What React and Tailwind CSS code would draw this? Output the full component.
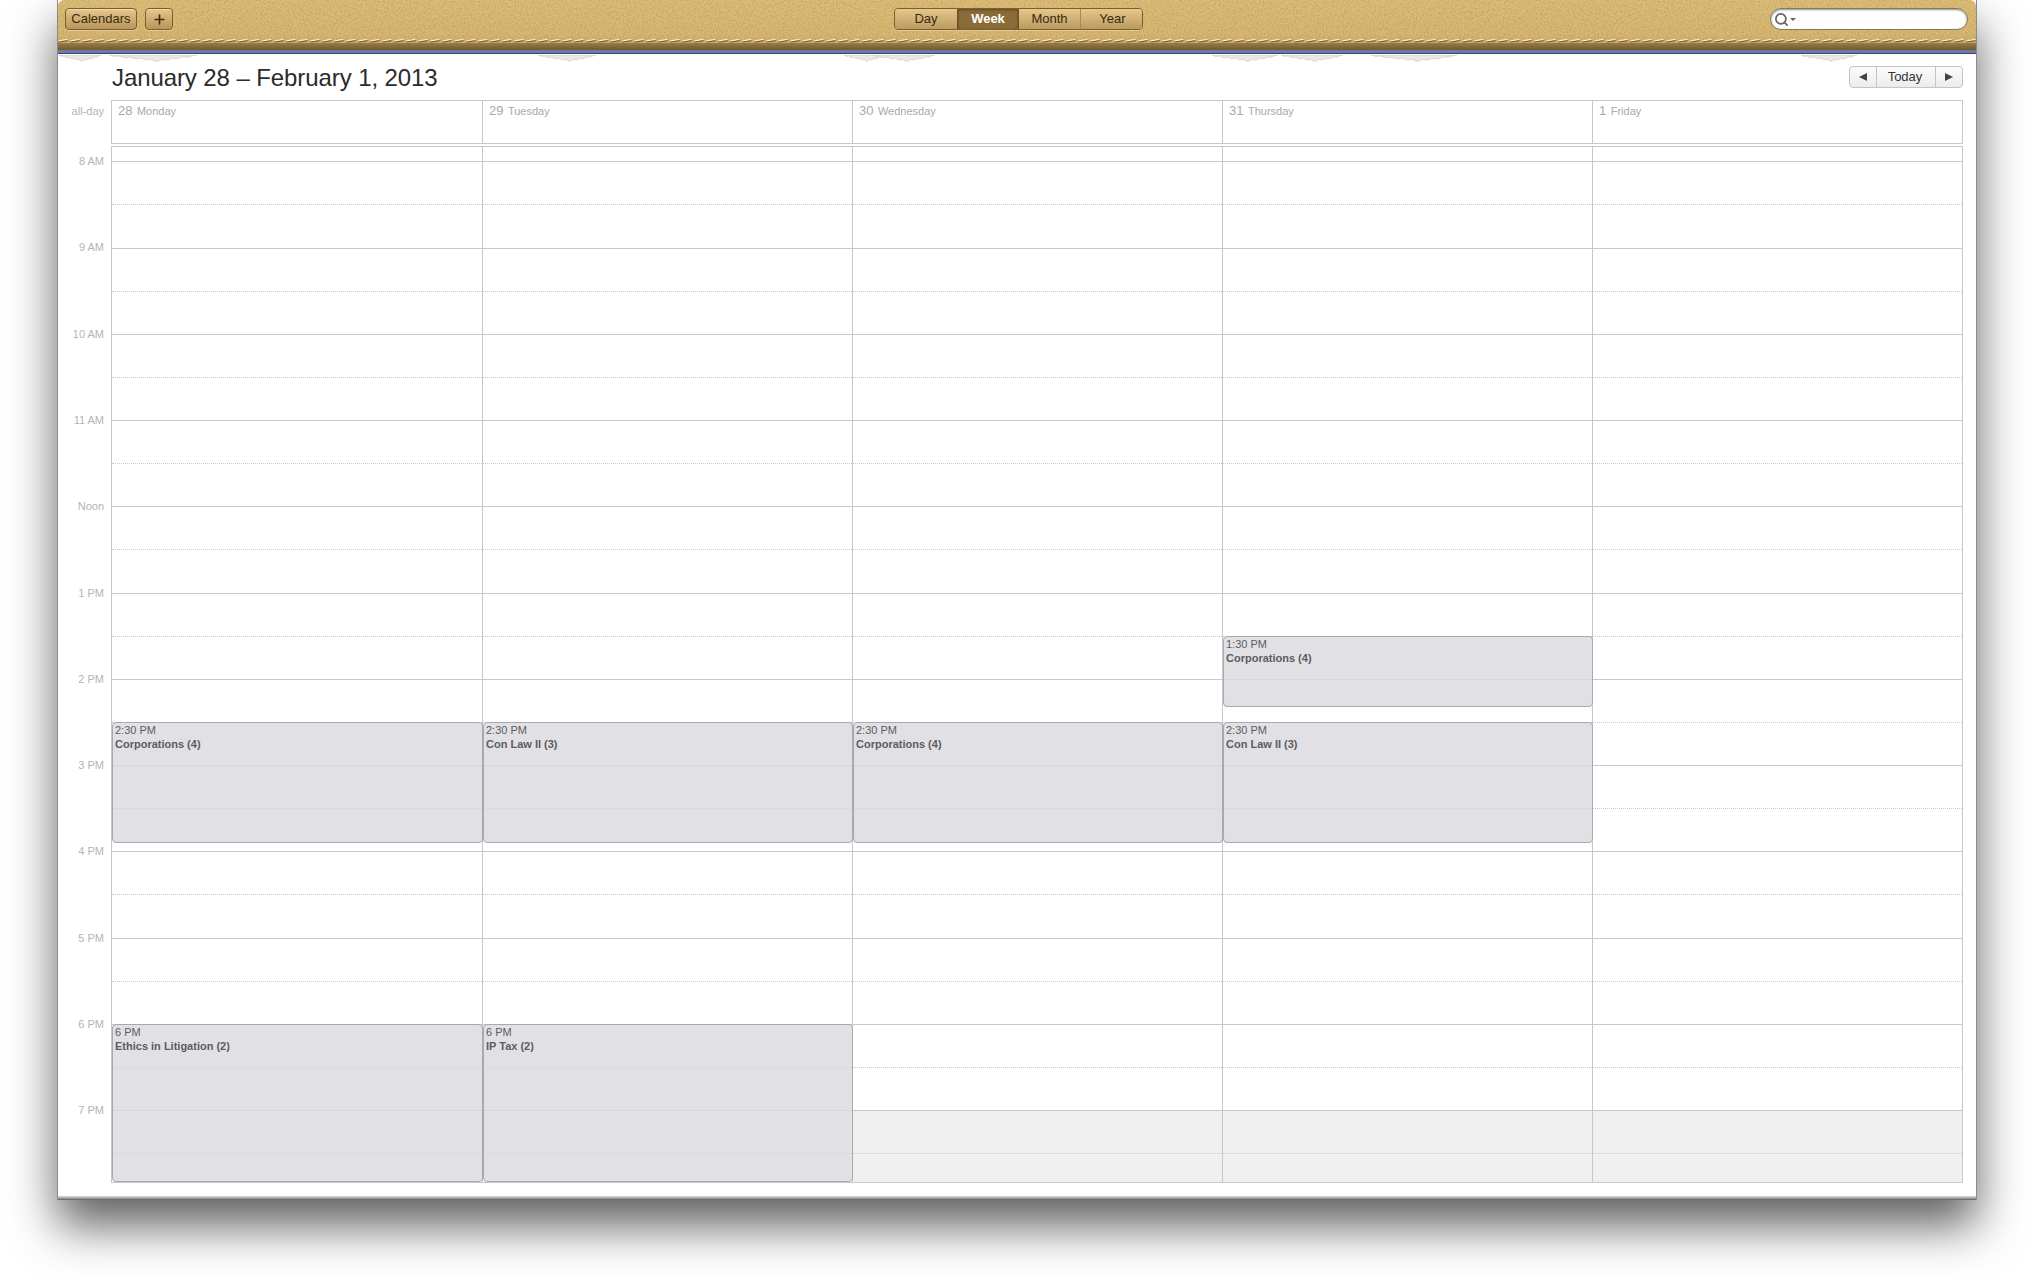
import { Plus, Search } from "lucide-react";

const HOUR = 86.27;
const FIRST_LINE = 14.3;
const HOURS = ["8 AM", "9 AM", "10 AM", "11 AM", "Noon", "1 PM", "2 PM", "3 PM", "4 PM", "5 PM", "6 PM", "7 PM"];

const DAYS = [
  {
    num: 28,
    name: "Monday",
    events: [
      { start: 14.5, end: 15.9, time: "2:30 PM", title: "Corporations (4)" },
      { start: 18, end: 19.83, time: "6 PM", title: "Ethics in Litigation (2)" },
    ],
  },
  {
    num: 29,
    name: "Tuesday",
    events: [
      { start: 14.5, end: 15.9, time: "2:30 PM", title: "Con Law II (3)" },
      { start: 18, end: 19.83, time: "6 PM", title: "IP Tax (2)" },
    ],
  },
  {
    num: 30,
    name: "Wednesday",
    shaded: true,
    events: [{ start: 14.5, end: 15.9, time: "2:30 PM", title: "Corporations (4)" }],
  },
  {
    num: 31,
    name: "Thursday",
    shaded: true,
    events: [
      { start: 13.5, end: 14.33, time: "1:30 PM", title: "Corporations (4)" },
      { start: 14.5, end: 15.9, time: "2:30 PM", title: "Con Law II (3)" },
    ],
  },
  { num: 1, name: "Friday", shaded: true, events: [] },
];

// y of an hour inside the time grid
const hourY = (h) => FIRST_LINE + (h - 8) * HOUR;

// torn paper scraps under the blue strip: [left, width]
const SCRAPS = [
  [58, 42],
  [108, 88],
  [537, 58],
  [843, 42],
  [872, 62],
  [1211, 66],
  [1280, 62],
  [1370, 86],
  [1800, 56],
];

function Leather() {
  return (
    <svg className="absolute inset-0 w-full h-full" aria-hidden="true">
      <filter id="grain" x="0" y="0" width="100%" height="100%">
        <feTurbulence type="fractalNoise" baseFrequency="0.6" numOctaves="3" seed="4" />
        <feColorMatrix values="0 0 0 0 0.3  0 0 0 0 0.18  0 0 0 0 0.02  0.5 0.5 0 0 -0.42" />
      </filter>
      <rect width="100%" height="100%" filter="url(#grain)" />
    </svg>
  );
}

function Stitches() {
  return (
    <svg className="absolute left-0 top-[37px] w-full h-[7px]" aria-hidden="true">
      <pattern id="stitch" width="12" height="7" patternUnits="userSpaceOnUse">
        <path d="M0.5 5 L9.5 3.4" stroke="#5a4220" strokeWidth="1.6" opacity="0.75" />
        <path d="M1 3.9 L9 2.4" stroke="#efe9d8" strokeWidth="1.3" strokeLinecap="round" />
      </pattern>
      <rect width="100%" height="7" fill="url(#stitch)" />
    </svg>
  );
}

function Scrap({ left, width }) {
  return (
    <svg
      className="absolute top-[55px] h-[7px]"
      style={{ left, width }}
      viewBox="0 0 100 7"
      preserveAspectRatio="none"
      aria-hidden="true"
    >
      <path
        d="M0 0 L6 1.4 L11 1 L17 2.8 L23 2.2 L30 3.8 L36 3.2 L42 5 L48 4.4 L54 6.6 L60 4.6 L66 5 L72 3.4 L78 3.8 L84 2 L90 2.2 L95 0.8 L100 0 Z"
        fill="#e8e8e8"
        stroke="#c4c4c4"
        strokeWidth="0.6"
        vectorEffect="non-scaling-stroke"
      />
    </svg>
  );
}

function Toolbar() {
  const btn =
    "h-[22px] rounded-[4px] border border-[#7d5f2c] bg-gradient-to-b from-[#e4c88c] to-[#b9955a] shadow-[inset_0_1px_0_rgba(255,255,255,0.35),0_1px_0_rgba(255,255,255,0.3)] text-[#3a2a10] flex items-center justify-center";
  return (
    <div className="relative h-[50px] shrink-0 overflow-hidden rounded-t-[6px] bg-gradient-to-b from-[#dcbe7b] via-[#d8b873] via-70% to-[#c6a35f]">
      <Leather />
      <div className="absolute left-0 right-0 top-[43px] h-[7px] bg-gradient-to-b from-[#9a7d47] to-[#725730]" />
      <Stitches />
      <div className="relative flex items-start pt-2 pl-[7px] pr-2">
        <div className="flex-1 flex gap-2">
          <button className={`${btn} w-[72px] text-[13px]`}>Calendars</button>
          <button className={`${btn} w-[28px]`}>
            <Plus size={15} strokeWidth={2.6} />
          </button>
        </div>
        <div className="ml-[4px] flex h-[22px] w-[249px] rounded-[4px] border border-[#7d5f2c] text-[13px] font-normal text-[#3a2a10] overflow-hidden shadow-[0_1px_0_rgba(255,255,255,0.3)]">
          <div className="w-[62px] flex items-center justify-center font-medium bg-gradient-to-b from-[#e4c88c] to-[#bc9a60]">Day</div>
          <div className="w-[62px] flex items-center justify-center font-bold text-white bg-[#8b6c38] border-x border-[#6c4f22] shadow-[inset_0_1px_3px_rgba(60,35,0,0.5)]">
            Week
          </div>
          <div className="w-[62px] flex items-center justify-center font-medium bg-gradient-to-b from-[#e4c88c] to-[#bc9a60] border-r border-[#a98a52]">Month</div>
          <div className="flex-1 flex items-center justify-center pl-[2px] font-medium bg-gradient-to-b from-[#e4c88c] to-[#bc9a60]">Year</div>
        </div>
        <div className="flex-1 flex justify-end">
          <div className="h-[22px] w-[198px] rounded-full bg-white border border-[#8a7a58] shadow-[inset_0_1px_2px_rgba(0,0,0,0.45)] flex items-center pl-[3px] text-[#666]">
            <Search size={15} strokeWidth={2.8} />
            <span className="ml-[1px] w-0 h-0 border-x-[3px] border-x-transparent border-t-[3px] border-t-[#666]" />
          </div>
        </div>
      </div>
    </div>
  );
}

function TitleRow() {
  return (
    <div className="h-[46px] shrink-0 flex items-start justify-between pl-[54px] pr-[13px]">
      <h1 className="mt-[10px] text-[24px] leading-7 font-normal text-[#2b2b2b] -tracking-[0.09px]">
        January 28 – February 1, 2013
      </h1>
      <div className="mt-3 flex h-[22px] w-[114px] rounded-[4px] border border-[#c4c4c4] bg-gradient-to-b from-[#fcfcfc] to-[#ececec] text-[#333]">
        <div className="w-[27px] flex items-center justify-center border-r border-[#c4c4c4]">
          <span className="w-0 h-0 border-y-[4.5px] border-y-transparent border-r-[8px] border-r-[#444]" />
        </div>
        <div className="flex-1 flex items-center justify-center pr-[2px] text-[13px]">Today</div>
        <div className="w-[27px] flex items-center justify-center border-l border-[#c4c4c4]">
          <span className="w-0 h-0 border-y-[4.5px] border-y-transparent border-l-[8px] border-l-[#444]" />
        </div>
      </div>
    </div>
  );
}

function AllDay() {
  return (
    <div className="flex h-[44px] shrink-0 pr-[13px]">
      <div className="w-[53px] shrink-0 pt-1 pr-[7px] text-right text-[11px] leading-[14px] text-[#b4b4b4]">all-day</div>
      <div className="flex-1 grid grid-cols-5 border border-[#c8c8c8]">
        {DAYS.map((d, i) => (
          <div key={d.num} className={`pl-[6px] pt-[2px] leading-[14px] text-[#a8a8a8] ${i ? "border-l border-[#c8c8c8]" : ""}`}>
            <span className="text-[13px]">{d.num}</span> <span className="text-[11px]">{d.name}</span>
          </div>
        ))}
      </div>
    </div>
  );
}

function Event({ ev }) {
  const top = hourY(ev.start);
  const height = hourY(ev.end) - top;
  return (
    <div
      className="absolute left-0 -right-[1px] z-10 rounded-[4px] border border-[#a9a9ad] bg-[#d9dade]/80 px-[2px] text-[11px] leading-[14px] text-[#5c5c60]"
      style={{ top, height }}
    >
      <div>{ev.time}</div>
      <div className="font-bold">{ev.title}</div>
    </div>
  );
}

function HourBlock({ shaded, isLast }) {
  return (
    <div
      className={`border-t border-[#c8c8c8] ${shaded ? "bg-[#f0f0f0]" : ""}`}
      style={{ height: isLast ? 71.7 : HOUR }}
    >
      <div className="h-[43px] border-b border-dotted border-[#c8c8c8]" />
    </div>
  );
}

function DayColumn({ day, first }) {
  return (
    <div className={`relative ${first ? "" : "border-l border-[#c8c8c8]"}`}>
      <div style={{ height: FIRST_LINE }} />
      {HOURS.map((h, i) => (
        <HourBlock key={h} shaded={day.shaded && i === HOURS.length - 1} isLast={i === HOURS.length - 1} />
      ))}
      {day.events.map((ev) => (
        <Event key={ev.time} ev={ev} />
      ))}
    </div>
  );
}

function TimeGrid() {
  return (
    <div className="flex mt-[2px] pr-[13px]">
      <div className="w-[53px] shrink-0">
        <div className="h-[8.2px]" />
        {HOURS.map((h, i) => (
          <div
            key={h}
            className="pr-[7px] text-right text-[11px] leading-[14px] text-[#b4b4b4]"
            style={{ height: i === HOURS.length - 1 ? 72 : HOUR }}
          >
            {h}
          </div>
        ))}
      </div>
      <div className="flex-1 grid grid-cols-5 border border-[#c8c8c8] h-[1037px] overflow-visible">
        {DAYS.map((d, i) => (
          <DayColumn key={d.num} day={d} first={i === 0} />
        ))}
      </div>
    </div>
  );
}

export default function App() {
  return (
    <div className="h-[1279px] overflow-hidden bg-white px-[57px] font-['Liberation_Sans',Arial,sans-serif]">
      <div className="relative flex h-[1200px] flex-col bg-white border-x border-[#8c8c8c] shadow-[0_26px_44px_rgba(0,0,0,0.62)]">
        <Toolbar />
        <div className="h-1 shrink-0 bg-[#6d79a8] border-b border-[#41445a]" />
        {SCRAPS.map(([left, width]) => (
          <Scrap key={left} left={left - 57} width={width} />
        ))}
        <TitleRow />
        <AllDay />
        <TimeGrid />
        <div className="absolute left-0 right-0 bottom-0 h-[4px] bg-gradient-to-b from-[#dcdcdc] via-[#a8a8a8] to-[#5f5f5f]" />
      </div>
    </div>
  );
}
